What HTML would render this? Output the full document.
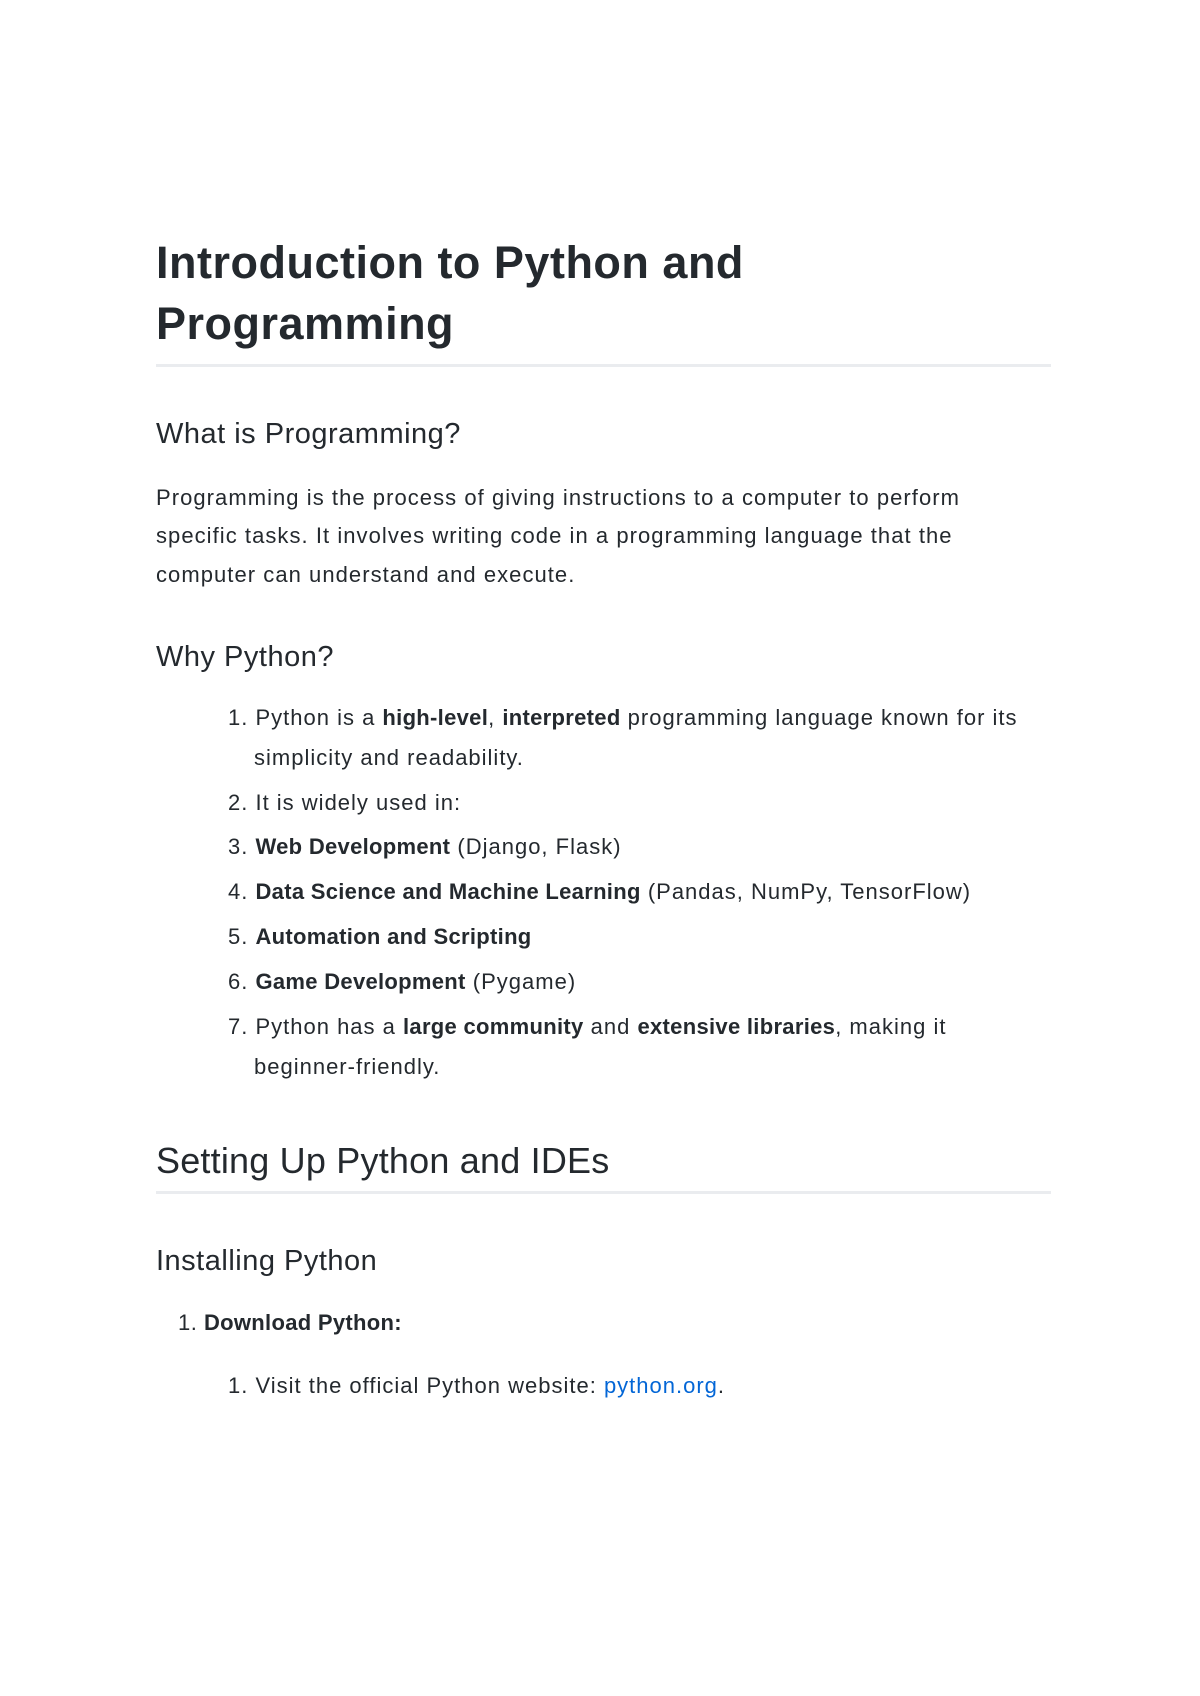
<!DOCTYPE html>
<html><head><meta charset="utf-8"><style>
body{margin:0;width:1200px;height:1696px;background:#fff;font-family:"Liberation Sans",sans-serif;color:#24292e;position:relative;overflow:hidden}
.a{position:absolute;white-space:nowrap;line-height:1}
.t{font-size:45px;left:156px;font-weight:bold;letter-spacing:0.5px}
.h2{font-size:29px;left:156px;letter-spacing:0.5px}
.h1b{font-size:36px;left:156px;letter-spacing:0.2px}
.p{font-size:22px;left:156px;letter-spacing:1.05px}
.n{font-size:22px;left:228px;letter-spacing:1px}
.n2{font-size:22px;left:178px;letter-spacing:0.5px}
.rule{position:absolute;left:156px;width:895px;height:3px;background:#eaecef}
b{font-weight:bold;letter-spacing:0.3px}
a{color:#0366d6;text-decoration:none}
</style></head><body>
<div class="a t" style="top:240px">Introduction to Python and</div>
<div class="a t" style="top:301px">Programming</div>
<div class="rule" style="top:364px"></div>
<div class="a h2" style="top:420px">What is Programming?</div>
<div class="a p" style="top:487px">Programming is the process of giving instructions to a computer to perform</div>
<div class="a p" style="top:525px">specific tasks. It involves writing code in a programming language that the</div>
<div class="a p" style="top:564px">computer can understand and execute.</div>
<div class="a h2" style="top:643px">Why Python?</div>
<div class="a n" style="top:707px">1. Python is a <b>high-level</b>, <b>interpreted</b> programming language known for its</div>
<div class="a n" style="top:747px;left:254px">simplicity and readability.</div>
<div class="a n" style="top:792px">2. It is widely used in:</div>
<div class="a n" style="top:836px">3. <b>Web Development</b> (Django, Flask)</div>
<div class="a n" style="top:881px">4. <b>Data Science and Machine Learning</b> (Pandas, NumPy, TensorFlow)</div>
<div class="a n" style="top:926px">5. <b>Automation and Scripting</b></div>
<div class="a n" style="top:971px">6. <b>Game Development</b> (Pygame)</div>
<div class="a n" style="top:1016px">7. Python has a <b>large community</b> and <b>extensive libraries</b>, making it</div>
<div class="a n" style="top:1056px;left:254px">beginner-friendly.</div>
<div class="a h1b" style="top:1143px">Setting Up Python and IDEs</div>
<div class="rule" style="top:1191px"></div>
<div class="a h2" style="top:1247px">Installing Python</div>
<div class="a n2" style="top:1312px">1. <b>Download Python:</b></div>
<div class="a n" style="top:1375px">1. Visit the official Python website: <a>python.org</a>.</div>
</body></html>
